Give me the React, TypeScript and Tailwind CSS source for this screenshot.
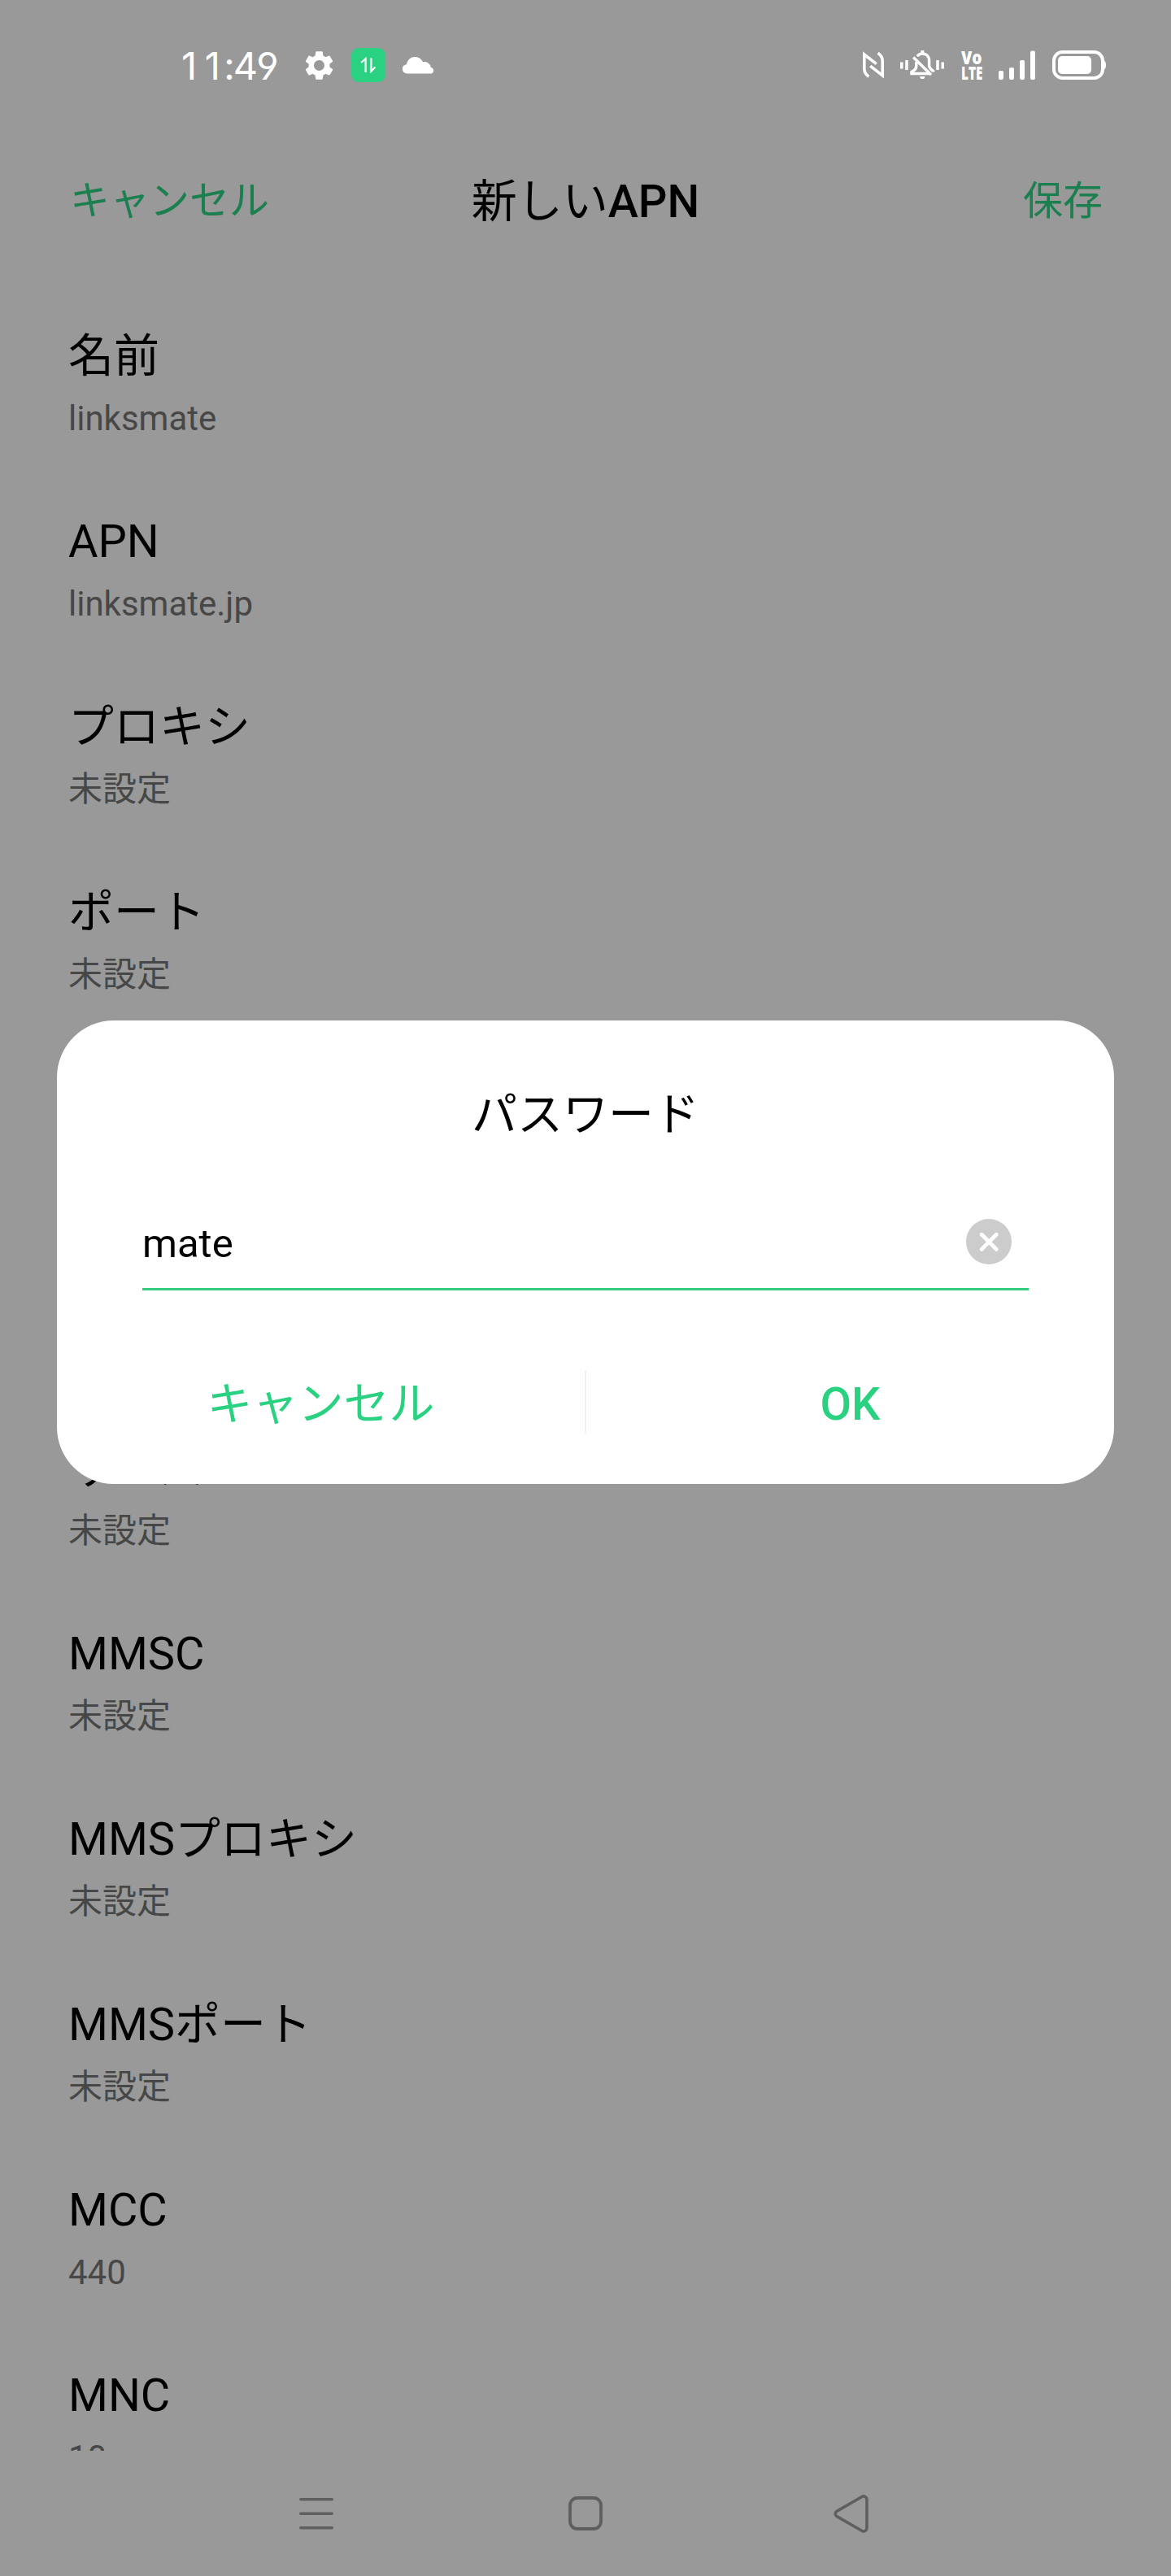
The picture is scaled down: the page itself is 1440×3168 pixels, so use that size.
import { useState } from 'react'
import { MdSettings } from 'react-icons/md'

interface ApnField {
  label: string
  value: string
}

const fields: ApnField[] = [
  { label: '名前', value: 'linksmate' },
  { label: 'APN', value: 'linksmate.jp' },
  { label: 'プロキシ', value: '未設定' },
  { label: 'ポート', value: '未設定' },
  { label: 'ユーザー名', value: '未設定' },
  { label: 'パスワード', value: '未設定' },
  { label: 'サーバー', value: '未設定' },
  { label: 'MMSC', value: '未設定' },
  { label: 'MMSプロキシ', value: '未設定' },
  { label: 'MMSポート', value: '未設定' },
  { label: 'MCC', value: '440' },
  { label: 'MNC', value: '10' },
]

function DataIcon() {
  return (
    <svg width="42" height="42" viewBox="0 0 42 42" fill="none">
      <rect width="42" height="42" rx="9" fill="#2ad181" />
      <path d="M12.2 18 17.6 13.2V30M24.4 12.5V28.8L29.4 23.6" stroke="#fff" strokeWidth="2.2" />
    </svg>
  )
}

function CloudIcon() {
  return (
    <svg width="39" height="22" viewBox="0 0 39 22" fill="#fff">
      <path d="M5.8 21.4A5.6 5.6 0 0 1 5 10.2 10.6 10.6 0 0 1 25.2 7.2 8.2 8.2 0 0 1 35 14a3.75 3.75 0 0 1 0 7.4z" />
    </svg>
  )
}

function NfcIcon() {
  return (
    <svg width="26" height="34" viewBox="0 0 26 34" fill="none" stroke="#fff" strokeWidth="3.6">
      <path d="M7.4 31.2C3.6 28.6 1.8 26 1.8 21.5V4L16.8 15.6" />
      <path d="M18.6 2.2C22.4 4.8 24.2 7.4 24.2 12V29.8L9.2 18.2" />
    </svg>
  )
}

function BellOffIcon() {
  return (
    <svg width="54" height="36" viewBox="0 0 54 36" fill="none" stroke="#fff" strokeWidth="3.5">
      <path d="M1.75 14.5v8M8 12v12M46 12v12M52.2 14.5v8" />
      <path d="M19.8 14.2v4.6c0 3.8-1.6 5-5.8 7.6v2.1h22.5" />
      <path d="M21 7.2c1.6-2.2 3.8-3.2 6.3-3.2 5 0 8.3 3.6 8.3 8.6v6c0 2.8 1.4 4.4 5 6.8v1" />
      <path d="M16.2 8.4 38 30" />
      <path d="M27.3 0v4" strokeWidth="4" />
      <path d="M24.2 32h6.2a3.1 3.1 0 0 1-6.2 0z" fill="#fff" stroke="none" />
    </svg>
  )
}

function VolteIcon() {
  return (
    <svg
      className="overflow-visible"
      width="27"
      height="37"
      viewBox="0 0 27 37"
      fill="#fff"
      fontFamily="Open Sans, sans-serif"
      fontWeight="800"
      fontSize="23"
    >
      <text x="0" y="17.4" textLength="25.5" lengthAdjust="spacingAndGlyphs">Vo</text>
      <text x="0" y="36" textLength="26.5" lengthAdjust="spacingAndGlyphs">LTE</text>
    </svg>
  )
}

function SignalIcon() {
  return (
    <svg width="46" height="36" viewBox="0 0 46 36" fill="#fff">
      <rect x="0" y="25" width="6" height="11" rx="2" />
      <rect x="13" y="21" width="6" height="15" rx="2" />
      <rect x="26" y="12" width="6" height="24" rx="2" />
      <rect x="39" y="0.5" width="6" height="35.5" rx="2" />
    </svg>
  )
}

function BatteryIcon() {
  return (
    <svg width="66" height="36" viewBox="0 0 66 36" fill="none">
      <rect x="2" y="2" width="60" height="32" rx="10.5" stroke="#fff" strokeWidth="4" />
      <rect x="7" y="7" width="41" height="22" rx="5" fill="#fff" />
      <path d="M63.5 12c1.7 1.2 2.5 3.2 2.5 6s-.8 4.8-2.5 6z" fill="#fff" />
    </svg>
  )
}

function StatusBar() {
  return (
    <div className="flex h-[160px] shrink-0 items-center pl-[223px] pr-[80px]">
      <span className="w-[148px] shrink-0 whitespace-nowrap font-[Inter,sans-serif] text-[47px] leading-none text-white [font-feature-settings:'cv04']">
        <span className="tracking-[9.5px]">1</span>
        <span className="tracking-[4.5px]">1</span>
        <span className="tracking-[-2px]">:4</span>9
      </span>
      <MdSettings className="shrink-0 text-white" size={43} />
      <div className="ml-[18px] flex items-center gap-[21px]">
        <DataIcon />
        <CloudIcon />
      </div>
      <div className="ml-auto flex items-center">
        <NfcIcon />
        <div className="ml-5"><BellOffIcon /></div>
        <div className="ml-[21px]"><VolteIcon /></div>
        <div className="ml-[19px]"><SignalIcon /></div>
        <div className="ml-5"><BatteryIcon /></div>
      </div>
    </div>
  )
}

function NavBar() {
  return (
    <div className="flex h-[154px] shrink-0 items-center pl-[368px]">
      <svg width="42" height="46" viewBox="0 0 42 46" stroke="#5f5f5f" strokeWidth="3.6" strokeLinecap="round">
        <path d="M1.8 5.7h38.4M1.8 23.3h38.4M1.8 40.8h38.4" />
      </svg>
      <svg className="ml-[289px]" width="42" height="42" viewBox="0 0 42 42" fill="none" stroke="#5f5f5f" strokeWidth="3.8">
        <rect x="2" y="2" width="38" height="38" rx="9" />
      </svg>
      <svg className="ml-[284px]" width="43" height="47" viewBox="0 0 43 47" fill="none" stroke="#5f5f5f" strokeWidth="3.6">
        <path d="M35 2.5 4 20.4a3.6 3.6 0 0 0 0 6.2L35 44.5a4 4 0 0 0 6-3.4V5.9a4 4 0 0 0-6-3.4z" />
      </svg>
    </div>
  )
}

function FieldRow({ label, value }: ApnField) {
  return (
    <div className="h-[228px] shrink-0 px-[84px] pt-[46px]">
      <p className="text-[56px] leading-[64px] text-black">{label}</p>
      <p className="mt-[17px] text-[42px] leading-[56px] text-[#474747]">{value}</p>
    </div>
  )
}

function PasswordDialog() {
  const [value, setValue] = useState('mate')

  return (
    <div className="absolute left-[70px] top-[1255px] h-[570px] w-[1300px] rounded-[70px] bg-white pt-[84px]">
      <h2 className="text-center text-[56px] leading-[64px] text-black">パスワード</h2>
      <div className="mx-[105px] mt-20 flex h-[104px] items-center border-b-[3px] border-[#33cb80] pb-[13px] pr-[21px]">
        <input
          value={value}
          onChange={e => setValue(e.target.value)}
          className="h-[60px] min-w-0 flex-1 pt-1 text-[49px] leading-[56px] text-black outline-none"
        />
        <button onClick={() => setValue('')} aria-label="クリア">
          <svg className="block" width="56" height="56" viewBox="0 0 56 56">
            <circle cx="28" cy="28" r="28" fill="#ccc" />
            <path d="m19.2 19.2 18 18.2M37.2 19.2l-18 18.2" stroke="#fff" strokeWidth="4.8" strokeLinecap="round" />
          </svg>
        </button>
      </div>
      <div className="mt-[71px] flex h-[133px] items-center text-[56px] leading-[64px] text-[#2ad181]">
        <button className="flex-1 pt-[5px]">キャンセル</button>
        <div className="h-[77px] w-0.5 bg-[#f0f0f0]" />
        <button className="flex-1 pt-[5px] font-medium">OK</button>
      </div>
    </div>
  )
}

export default function App() {
  return (
    <div className="relative flex h-[3168px] w-[1440px] flex-col overflow-hidden bg-[#999] font-[Roboto,'Noto_Sans_CJK_JP',sans-serif]">
      <StatusBar />

      <header className="flex h-[200px] shrink-0 items-center justify-between px-[84px] pb-6 text-[49px] leading-[56px] text-[#1b7f4f]">
        <button className="w-[300px] pl-0.5 text-left">キャンセル</button>
        <h1 className="text-[56px] leading-[64px] text-black">
          新しい<span className="font-medium">APN</span>
        </h1>
        <button className="w-[300px] text-right">保存</button>
      </header>

      <main className="flex flex-1 flex-col overflow-hidden">
        {fields.map(field => (
          <FieldRow key={field.label} {...field} />
        ))}
      </main>

      <NavBar />
      <PasswordDialog />
    </div>
  )
}
